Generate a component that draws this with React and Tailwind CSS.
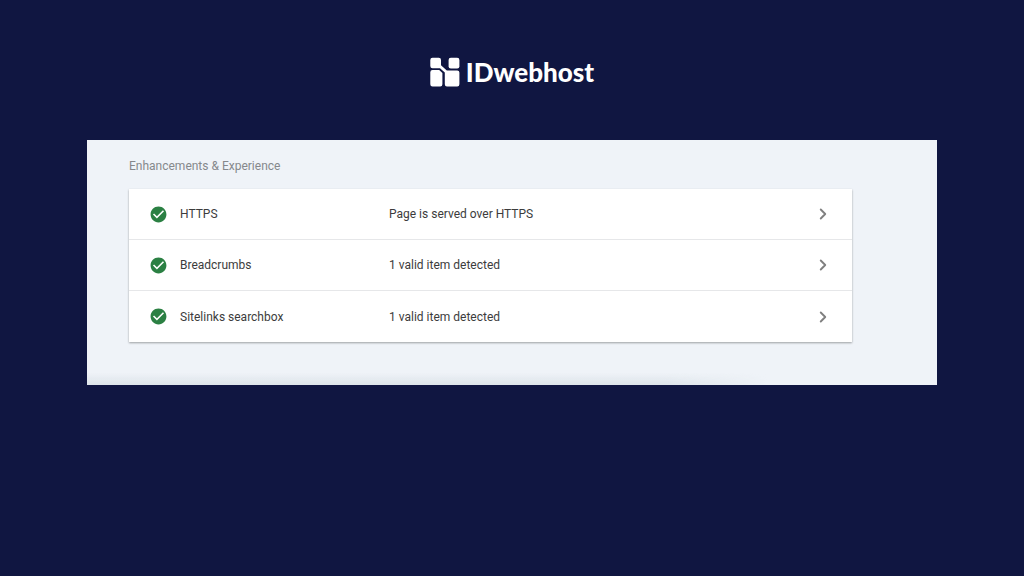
import { MdCheckCircle } from 'react-icons/md';
import { ChevronRight } from 'lucide-react';

const ENHANCEMENTS = [
  { id: 'https',       label: 'HTTPS',               status: 'Page is served over HTTPS' },
  { id: 'breadcrumbs', label: 'Breadcrumbs',         status: '1 valid item detected' },
  { id: 'sitelinks',   label: 'Sitelinks searchbox', status: '1 valid item detected' },
];

const Logo = () => (
  <a href="#home" className="flex items-center gap-1.5 text-white">
    <svg viewBox="0 0 30 30" className="w-[30px] h-[30px] shrink-0" aria-hidden="true">
      <g fill="currentColor">
        <path d="M2.5.8h6.3A2.2 2.2 0 0 1 11 3v5.2l5.8 5.2h10.4a2.2 2.2 0 0 1 2.2 2.2v11.7a2.2 2.2 0 0 1-2.2 2.2H17a2.2 2.2 0 0 1-2.2-2.2V15.6L10 11.2H2.5A2.2 2.2 0 0 1 .3 9V3A2.2 2.2 0 0 1 2.5.8z" />
        <rect x="18.6" y="0.8" width="10.8" height="10.6" rx="2.2" />
        <path d="M2.5 13h6.7l3.2 3v11.3a2.2 2.2 0 0 1-2.2 2.2H2.5a2.2 2.2 0 0 1-2.2-2.2V15.2A2.2 2.2 0 0 1 2.5 13z" />
      </g>
    </svg>
    <span className="font-['Lato',sans-serif] text-[26px] leading-[30px] font-black">IDwebhost</span>
  </a>
);

const EnhancementRow = ({ item }) => (
  <li className="h-[51px] not-last:border-b border-[#e6e7e9]">
    <a href={`#${item.id}`} className="flex items-center h-full px-5 hover:bg-gray-50">
      <MdCheckCircle size={19} className="text-[#2b8043] shrink-0" />
      <span className="w-[209px] ml-3 shrink-0">{item.label}</span>
      <span className="grow">{item.status}</span>
      <ChevronRight size={18} strokeWidth={2.5} className="text-[#808080] shrink-0" />
    </a>
  </li>
);

const App = () => {
  return (
    <div className="min-h-screen bg-[#101641] font-['Roboto',sans-serif]">
      <header className="flex justify-center pt-[57px]">
        <Logo />
      </header>

      <main className="px-[87px] pt-[53px]">
        <section className="bg-[#eff3f8] pt-4">
          <h1 className="pl-[42px] text-[12px] leading-5 text-[#85888c]">
            Enhancements &amp; Experience
          </h1>

          <ul className="mt-[13px] ml-[42px] mr-[85px] bg-white text-[12px] leading-5 text-[#3c3c3c] shadow-[0_1px_2px_rgba(0,0,0,0.35)]">
            {ENHANCEMENTS.map((item) => (
              <EnhancementRow key={item.id} item={item} />
            ))}
          </ul>

          {/* Soft shade along the bottom edge */}
          <div className="mt-[31px] h-3 w-4/5 bg-linear-to-b from-transparent to-[#dde4ea] mask-r-from-85%" />
        </section>
      </main>
    </div>
  );
};

export default App;
